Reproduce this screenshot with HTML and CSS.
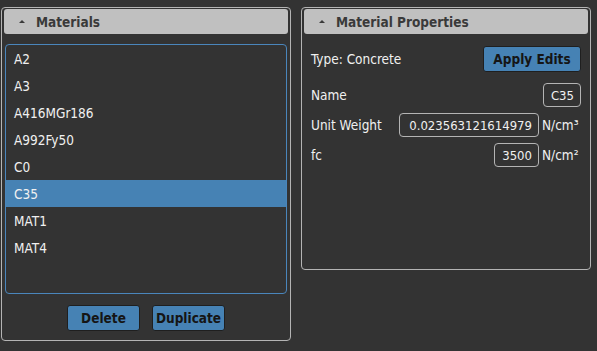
FILE: index.html
```html
<!DOCTYPE html>
<html lang="en">

<head>
    <meta charset="UTF-8">
    <title>Materials</title>
    <link rel="stylesheet" href="styles.css">
</head>

<body>

    <div class="panels">
        <div class="panel panel-materials">
            <div class="panel-header">
                <span class="caret"></span>
                <span>Materials</span>
            </div>
            <ul class="material-list">
                <li>A2</li>
                <li>A3</li>
                <li>A416MGr186</li>
                <li>A992Fy50</li>
                <li>C0</li>
                <li class="selected">C35</li>
                <li>MAT1</li>
                <li>MAT4</li>
            </ul>
            <div class="list-actions">
                <button class="btn">Delete</button>
                <button class="btn">Duplicate</button>
            </div>
        </div>

        <div class="panel panel-props">
            <div class="panel-header">
                <span class="caret"></span>
                <span>Material Properties</span>
            </div>
            <div class="props">
                <div class="prop-row type-row">
                    <span class="label">Type: Concrete</span>
                    <button class="btn btn-apply">Apply Edits</button>
                </div>
                <div class="prop-row">
                    <span class="label">Name</span>
                    <input class="field field-name" type="text" value="C35">
                </div>
                <div class="prop-row">
                    <span class="label">Unit Weight</span>
                    <span class="value">
                        <input class="field field-long" type="text" value="0.023563121614979">
                        <span class="unit">N/cm³</span>
                    </span>
                </div>
                <div class="prop-row">
                    <span class="label">fc</span>
                    <span class="value">
                        <input class="field field-short" type="text" value="3500">
                        <span class="unit">N/cm²</span>
                    </span>
                </div>
            </div>
        </div>
    </div>

</body>

</html>
```

FILE: styles.css
```css
body {
    margin: 0;
    background-color: #333333;
    font-family: 'DejaVu Sans Condensed', 'DejaVu Sans', sans-serif;
    font-size: 13.5px;
    color: #f0f0f0;
}

.panels {
    display: flex;
    align-items: flex-start;
    gap: 10px;
    padding: 7px 0 0 1px;
}

.panel {
    width: 284px;
    border: 1px solid #b4b4b4;
    border-radius: 4px;
    padding: 1px 2px 2px 2px;
}

.panel-header {
    display: flex;
    align-items: center;
    height: 25px;
    background-color: #c0c0c0;
    border-radius: 3px;
    color: #3a3a3a;
    font-weight: 700;
}

.caret {
    width: 0;
    height: 0;
    margin: 0 11px 0 15px;
    border-left: 3px solid transparent;
    border-right: 3px solid transparent;
    border-bottom: 3px solid #3a3a3a;
}

/* materials list */

.material-list {
    list-style: none;
    margin: 10px 1px 0 1px;
    padding: 0;
    height: 248px;
    border: 1px solid #4a86bc;
    border-radius: 4px;
}

.material-list li {
    height: 27px;
    line-height: 28px;
    padding-left: 8px;
}

.material-list li.selected {
    background-color: #4682b4;
}

.list-actions {
    display: flex;
    justify-content: center;
    gap: 12px;
    margin: 11px 0 7px 0;
}

.btn {
    width: 73px;
    height: 26px;
    padding: 0;
    background-color: #4682b4;
    border: 1px solid #1f1f1f;
    border-radius: 3px;
    color: #151515;
    font-family: inherit;
    font-size: 13.5px;
    font-weight: 700;
}

/* properties */

.props {
    display: flex;
    flex-direction: column;
    gap: 6px;
    padding: 12px 7px 100px 7px;
}

.prop-row {
    display: flex;
    align-items: center;
    justify-content: space-between;
    height: 24px;
}

.type-row {
    height: 26px;
    margin-bottom: 5px;
}

.btn-apply {
    width: 98px;
}

.value {
    display: flex;
    align-items: center;
    gap: 3px;
}

.field {
    box-sizing: border-box;
    height: 24px;
    padding: 0 6px;
    background-color: #333333;
    border: 1px solid #b4b4b4;
    border-radius: 4px;
    color: #f0f0f0;
    font-family: inherit;
    font-size: 13px;
    text-align: right;
}

.field-name {
    width: 38px;
}

.field-long {
    width: 140px;
}

.field-short {
    width: 45px;
}

.unit {
    width: 39px;
}
```
